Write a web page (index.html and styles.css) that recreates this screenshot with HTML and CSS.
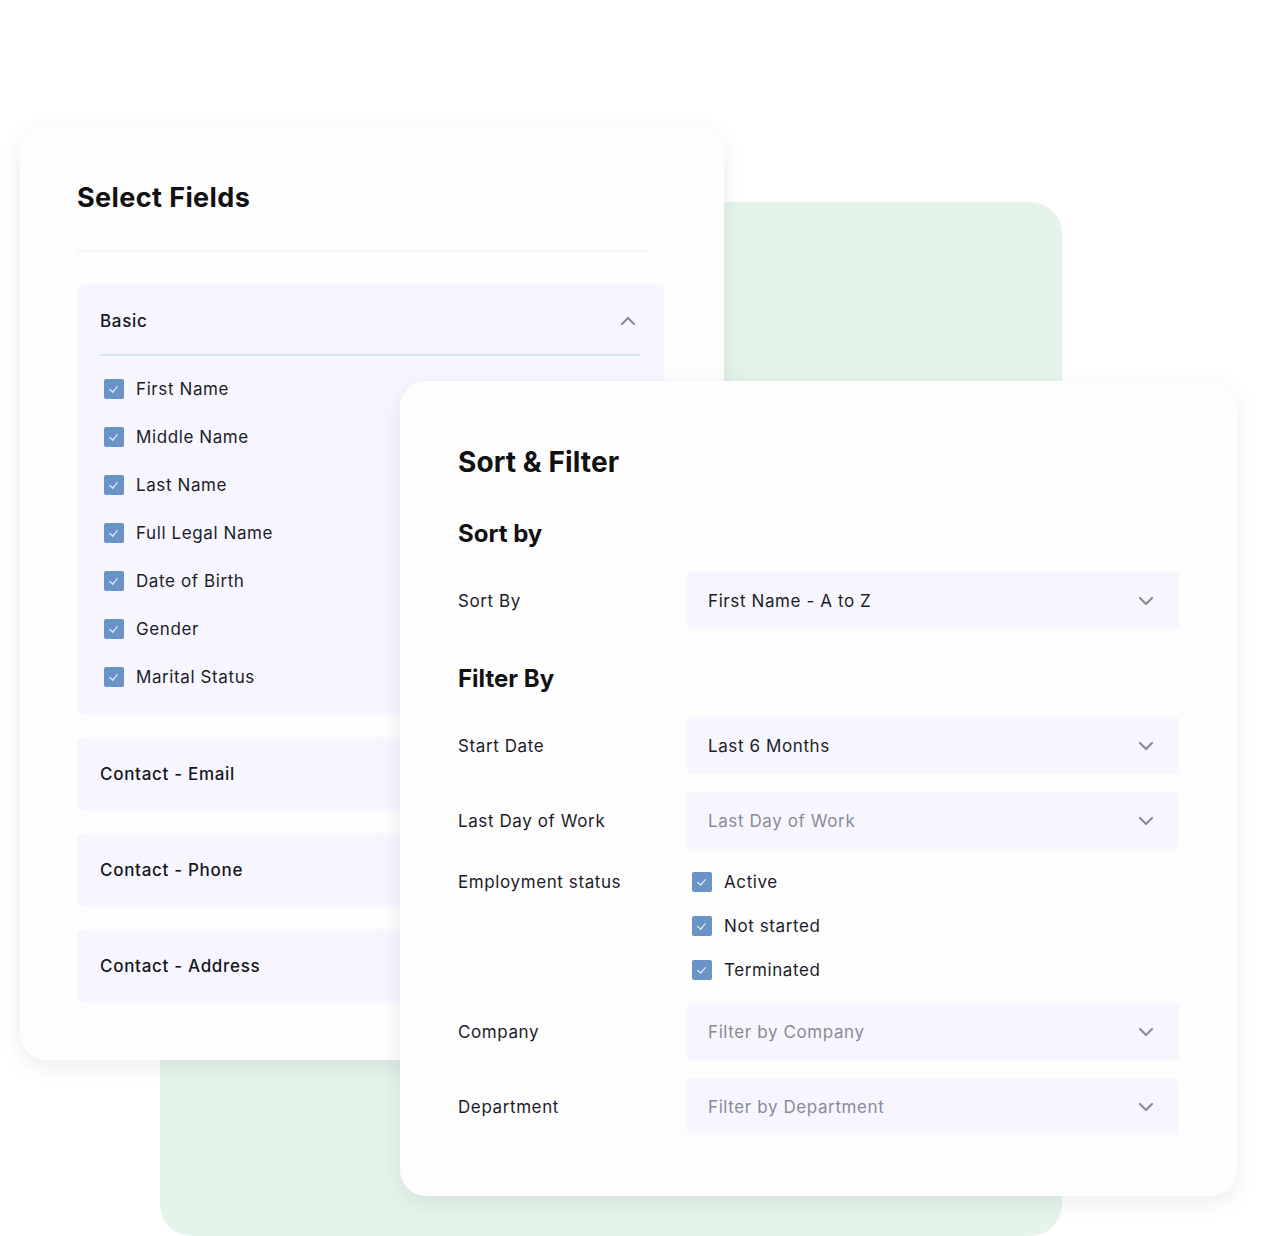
FILE: index.html
```html
<!DOCTYPE html>
<html lang="en">
<head>
  <meta charset="UTF-8">
  <title>Select Fields - Sort &amp; Filter</title>
  <link rel="stylesheet" href="styles.css">
</head>
<body>

<div class="stage">
  <!-- green backdrop -->
  <div class="backdrop"></div>

  <!-- Select fields card -->
  <div class="card fields-card">
    <h2 class="card-title">Select Fields</h2>
    <div class="divider"></div>

    <div class="group open">
      <div class="group-head">
        <span>Basic</span>
        <svg class="chev" width="16" height="10" viewBox="0 0 16 10"><path d="M2 8 L8 2 L14 8" fill="none" stroke="#8b8b96" stroke-width="2.2" stroke-linecap="round" stroke-linejoin="round"/></svg>
      </div>
      <ul class="check-list">
        <li><span class="box"></span>First Name</li>
        <li><span class="box"></span>Middle Name</li>
        <li><span class="box"></span>Last Name</li>
        <li><span class="box"></span>Full Legal Name</li>
        <li><span class="box"></span>Date of Birth</li>
        <li><span class="box"></span>Gender</li>
        <li><span class="box"></span>Marital Status</li>
      </ul>
    </div>

    <div class="group"><div class="group-head"><span>Contact - Email</span></div></div>
    <div class="group"><div class="group-head"><span>Contact - Phone</span></div></div>
    <div class="group"><div class="group-head"><span>Contact - Address</span></div></div>
  </div>

  <!-- Sort & filter card -->
  <div class="card filter-card">
    <h2 class="card-title big">Sort &amp; Filter</h2>

    <h3 class="section-title">Sort by</h3>
    <div class="form-row">
      <label>Sort By</label>
      <div class="select">First Name - A to Z<svg class="chev" width="16" height="10" viewBox="0 0 16 10"><path d="M2 2 L8 8 L14 2" fill="none" stroke="#8b8b96" stroke-width="2.2" stroke-linecap="round" stroke-linejoin="round"/></svg></div>
    </div>

    <h3 class="section-title filter">Filter By</h3>
    <div class="form-row">
      <label>Start Date</label>
      <div class="select">Last 6 Months<svg class="chev" width="16" height="10" viewBox="0 0 16 10"><path d="M2 2 L8 8 L14 2" fill="none" stroke="#8b8b96" stroke-width="2.2" stroke-linecap="round" stroke-linejoin="round"/></svg></div>
    </div>
    <div class="form-row">
      <label>Last Day of Work</label>
      <div class="select empty">Last Day of Work<svg class="chev" width="16" height="10" viewBox="0 0 16 10"><path d="M2 2 L8 8 L14 2" fill="none" stroke="#8b8b96" stroke-width="2.2" stroke-linecap="round" stroke-linejoin="round"/></svg></div>
    </div>
    <div class="form-row status">
      <label>Employment status</label>
      <ul class="check-list small">
        <li><span class="box"></span>Active</li>
        <li><span class="box"></span>Not started</li>
        <li><span class="box"></span>Terminated</li>
      </ul>
    </div>
    <div class="form-row">
      <label>Company</label>
      <div class="select empty">Filter by Company<svg class="chev" width="16" height="10" viewBox="0 0 16 10"><path d="M2 2 L8 8 L14 2" fill="none" stroke="#8b8b96" stroke-width="2.2" stroke-linecap="round" stroke-linejoin="round"/></svg></div>
    </div>
    <div class="form-row">
      <label>Department</label>
      <div class="select empty">Filter by Department<svg class="chev" width="16" height="10" viewBox="0 0 16 10"><path d="M2 2 L8 8 L14 2" fill="none" stroke="#8b8b96" stroke-width="2.2" stroke-linecap="round" stroke-linejoin="round"/></svg></div>
    </div>
  </div>
</div>

</body>
</html>
```

FILE: styles.css
```css
* {
  box-sizing: border-box;
}

body {
  margin: 0;
  background: #ffffff;
  font-family: Inter, "Open Sans", sans-serif;
  color: #1c1c28;
}

.stage {
  position: relative;
  width: 1262px;
  height: 1236px;
  overflow: hidden;
}

.backdrop {
  position: absolute;
  left: 160px;
  top: 202px;
  width: 902px;
  height: 1034px;
  background: #e4f4ea;
  border-radius: 32px;
}

.card {
  position: absolute;
  background: #fdfdfe;
  border-radius: 26px;
  box-shadow: 0 6px 22px rgba(30, 30, 60, 0.08);
}

.fields-card {
  left: 20px;
  top: 125px;
  width: 704px;
  height: 935px;
  padding: 53px 60px 0 57px;
}

.card-title {
  margin: 0;
  font-size: 27px;
  font-weight: 700;
  line-height: 40px;
  color: #111;
  letter-spacing: 0.4px;
}

.divider {
  height: 2px;
  background: #f5f5f8;
  margin: 32px 14px 32px 0;
}

.group {
  background: #f7f6fe;
  border-radius: 6px;
  margin-bottom: 22px;
  padding: 0 24px 0 23px;
}

.group-head {
  height: 74px;
  display: flex;
  align-items: center;
  justify-content: space-between;
  font-size: 17px;
  font-weight: 500;
  color: #15151f;
  letter-spacing: 0.7px;
}

.group.open .group-head {
  height: 72px;
  padding-top: 3px;
  border-bottom: 2px solid #d8e5f6;
}

.group.open .chev {
  margin-right: 4px;
}

.check-list {
  list-style: none;
  margin: 0;
  padding: 9px 0 14px 4px;
}

.check-list li {
  display: flex;
  align-items: center;
  gap: 12px;
  height: 48px;
  font-size: 17px;
  color: #1c1c28;
  letter-spacing: 0.6px;
}

.box {
  width: 20px;
  height: 20px;
  border-radius: 2px;
  background: #6a94c8;
  position: relative;
  flex-shrink: 0;
}

.box::after {
  content: "";
  position: absolute;
  left: 7px;
  top: 5px;
  width: 4px;
  height: 7px;
  border: solid #fff;
  border-width: 0 1.6px 1.6px 0;
  transform: rotate(40deg);
}

.filter-card {
  left: 400px;
  top: 381px;
  width: 837px;
  height: 815px;
  padding: 62px 59px 0 58px;
}

.card-title.big {
  font-size: 28px;
  line-height: 38px;
  letter-spacing: 0.1px;
}

.section-title {
  margin: 36px 0 22px;
  font-size: 24px;
  font-weight: 700;
  line-height: 34px;
  color: #111;
}

.section-title.filter {
  margin: 34px 0 22px;
}

.form-row {
  display: grid;
  grid-template-columns: 230px 1fr;
  align-items: center;
  margin-bottom: 20px;
}

.form-row label {
  font-size: 17px;
  color: #1c1c28;
  letter-spacing: 0.6px;
}

.select {
  height: 55px;
  background: #f7f6fe;
  display: flex;
  align-items: center;
  justify-content: space-between;
  padding: 0 24px 0 20px;
  font-size: 17px;
  color: #1c1c28;
  letter-spacing: 0.6px;
  box-shadow: 0 0 2px rgba(230, 230, 245, 0.6);
}

.select.empty {
  color: #8a8a98;
}

.form-row.status {
  align-items: start;
  margin-top: -8px;
  margin-bottom: 12px;
}

.form-row.status label {
  line-height: 44px;
}

.check-list.small {
  padding: 0 0 0 4px;
}

.check-list.small li {
  height: 44px;
}
```
